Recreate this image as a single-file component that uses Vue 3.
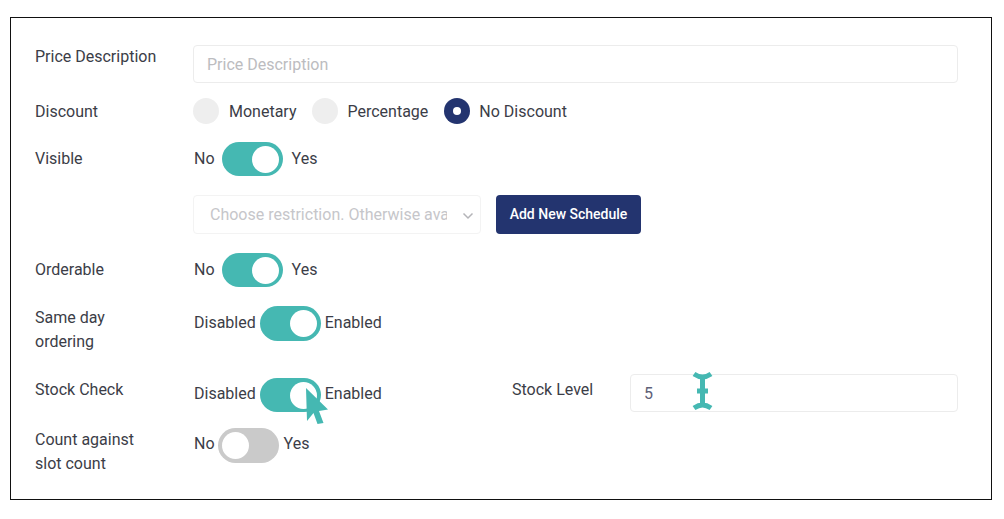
<script setup>
const radios = [
  { label: 'Monetary', on: false },
  { label: 'Percentage', on: false },
  { label: 'No Discount', on: true },
]
</script>

<template>
  <div class="frame">
    <div class="row r-desc">
      <div class="label">Price Description</div>
      <div class="input grow placeholder">Price Description</div>
    </div>

    <div class="row r-discount">
      <div class="label">Discount</div>
      <div class="radios">
        <div v-for="r in radios" :key="r.label" class="radio-item">
          <span class="radio" :class="{ on: r.on }"></span>
          <span class="radio-text">{{ r.label }}</span>
        </div>
      </div>
    </div>

    <div class="row r-toggle">
      <div class="label">Visible</div>
      <div class="switch-group">
        <span>No</span><span class="toggle on wide"><i></i></span><span>Yes</span>
      </div>
    </div>

    <div class="row r-schedule">
      <div class="label"></div>
      <div class="select">
        <span class="select-text">Choose restriction. Otherwise ava</span>
        <svg class="chev" width="12" height="8" viewBox="0 0 12 8"><path d="M1.500 1.500 6 6l4.500-4.500" fill="none" stroke="#b4b4b8" stroke-width="1.500"/></svg>
      </div>
      <button class="btn">Add New Schedule</button>
    </div>

    <div class="row r-toggle">
      <div class="label">Orderable</div>
      <div class="switch-group">
        <span>No</span><span class="toggle on wide"><i></i></span><span>Yes</span>
      </div>
    </div>

    <div class="row r-sameday">
      <div class="label two">Same day<br />ordering</div>
      <div class="switch-group">
        <span>Disabled</span><span class="toggle on"><i></i></span><span>Enabled</span>
      </div>
    </div>

    <div class="row r-stock">
      <div class="label">Stock Check</div>
      <div class="switch-group stock-switch">
        <span>Disabled</span><span class="toggle on short"><i></i></span><span>Enabled</span>
      </div>
      <div class="stock-label">Stock Level</div>
      <div class="input stock-input">5</div>
    </div>

    <div class="row r-count">
      <div class="label two">Count against<br />slot count</div>
      <div class="switch-group">
        <span>No</span><span class="toggle off"><i></i></span><span>Yes</span>
      </div>
    </div>

    <svg class="cursor-arrow" width="26" height="38" viewBox="0 0 26 38">
      <path d="M2 0 24 21.500 15 23 19.500 35 13.500 36 9.500 25 3 33Z" fill="#45b8b2"/>
    </svg>
    <svg class="cursor-beam" width="22" height="40" viewBox="0 0 22 40">
      <path d="M3 3c3 2 5.500 3 8.500 3s5.500-1 8.500-3M11.500 6v28M3 37c3-2 5.500-3 8.500-3s5.500 1 8.500 3M6 20h11" fill="none" stroke="#45b8b2" stroke-width="5"/>
    </svg>
  </div>
</template>

<style scoped>
.frame {
  position: relative;
  box-sizing: border-box;
  width: 982px;
  height: 483px;
  margin: 17px 0 0 10px;
  padding: 27px 33px 0 24px;
  border: 1px solid #111;
  background: #fff;
  font-family: Roboto, "Liberation Sans", sans-serif;
  font-size: 16px;
  line-height: 24px;
  color: #3b3d47;
}
.row {
  display: flex;
  align-items: flex-start;
}
.label {
  flex: 0 0 158px;
}
.r-desc { height: 38px; }
.r-discount { height: 26px; margin-top: 15px; }
.r-discount .label { margin-top: 2px; }
.r-toggle { height: 34px; margin-top: 18px; }
.r-toggle .label { margin-top: 5px; }
.r-schedule { height: 39px; margin-top: 19px; }
.r-schedule + .r-toggle { margin-top: 19px; }
.r-sameday { height: 48px; margin-top: 19px; }
.r-stock { height: 38px; margin-top: 20px; }
.r-stock .label { margin-top: 4px; }
.r-count { height: 48px; margin-top: 16px; }
.two { margin-top: 0; }
.grow { flex: 1; }

.input {
  box-sizing: border-box;
  height: 38px;
  padding: 7px 13px;
  border: 1px solid #ececec;
  border-radius: 4px;
}
.placeholder { color: #bcbcc0; }

.radios {
  display: flex;
  align-items: center;
  height: 26px;
}
.radio-item {
  display: flex;
  align-items: center;
  margin-right: 16px;
}
.radio {
  position: relative;
  width: 26px;
  height: 26px;
  border-radius: 50%;
  background: #eeeeee;
}
.radio.on { background: #23346f; }
.radio.on::after {
  content: "";
  position: absolute;
  left: 9px;
  top: 9px;
  width: 8px;
  height: 8px;
  border-radius: 50%;
  background: #fff;
}
.radio-text {
  margin-left: 9px;
  padding-top: 1px;
}
.radio-item:first-child .radio-text { margin-left: 10px; }

.switch-group {
  display: flex;
  align-items: flex-start;
  padding-left: 1px;
}
.switch-group > span:not(.toggle) {
  margin-top: 4px;
  padding-top: 1px;
}
.r-stock .switch-group > span:not(.toggle),
.r-count .switch-group > span:not(.toggle) {
  padding-top: 0;
}
.toggle {
  position: relative;
  display: block;
  flex: none;
  width: 61px;
  height: 35px;
  margin: 0 4px;
  border-radius: 18px;
  background: #cacaca;
}
.toggle.wide {
  height: 34px;
  margin: 0 9px 0 7px;
}
.toggle.short { height: 34px; }
.toggle.off { margin: 0 5px 0 3px; }
.toggle i {
  position: absolute;
  top: 4px;
  left: 4px;
  width: 27px;
  height: 27px;
  border-radius: 50%;
  background: #fff;
}
.toggle.on { background: #45b8b2; }
.toggle.on i { left: 30px; }

.select {
  position: relative;
  box-sizing: border-box;
  flex: none;
  width: 288px;
  height: 39px;
  padding: 7px 0 0 16px;
  border: 1px solid #f3f3f3;
  border-radius: 4px;
  color: #c6c6ca;
}
.select-text {
  display: block;
  width: 237px;
  overflow: hidden;
  white-space: nowrap;
}
.chev {
  position: absolute;
  right: 6px;
  top: 16px;
}
.btn {
  box-sizing: border-box;
  width: 145px;
  height: 39px;
  margin-left: 15px;
  padding: 0 0 2px;
  border: 0;
  border-radius: 4px;
  background: #23346f;
  color: #fff;
  font: 500 14px Roboto, "Liberation Sans", sans-serif;
}

.r-stock .switch-group { padding-top: 4px; }
.stock-switch { flex: 0 0 318px; }
.stock-label {
  flex: 0 0 118px;
  margin-top: 4px;
}
.stock-input {
  flex: 1;
  color: #5e6078;
}

.cursor-arrow {
  position: absolute;
  left: 293px;
  top: 370px;
}
.cursor-beam {
  position: absolute;
  left: 680px;
  top: 353px;
}
</style>

<style>
html, body { background: #fff; }
</style>
